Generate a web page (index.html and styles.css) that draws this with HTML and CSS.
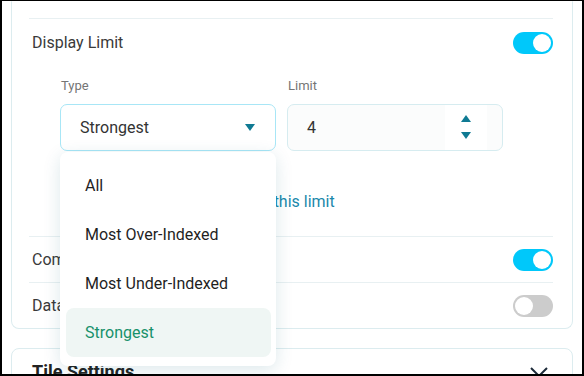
FILE: index.html
```html
<!DOCTYPE html>
<html>
<head>
    <title>Widget Settings</title>
    <meta charset="utf-8">
    <link rel="stylesheet" href="styles.css">
</head>
<body>
    <div class="panel">
        <div class="section">
            <div class="row">
                <span class="row-label">Display Limit</span>
                <span class="toggle on"></span>
            </div>
            <div class="limit-fields">
                <div class="field">
                    <label class="field-label">Type</label>
                    <div class="select focused">
                        <span>Strongest</span>
                        <span class="caret"></span>
                    </div>
                    <div class="menu">
                        <div class="menu-item">All</div>
                        <div class="menu-item">Most Over-Indexed</div>
                        <div class="menu-item">Most Under-Indexed</div>
                        <div class="menu-item selected">Strongest</div>
                    </div>
                </div>
                <div class="field">
                    <label class="field-label">Limit</label>
                    <div class="number-input">
                        <span class="value">4</span>
                        <span class="spinner">
                            <span class="caret up"></span>
                            <span class="caret"></span>
                        </span>
                    </div>
                </div>
            </div>
            <div class="limit-note">
                <a href="#" class="link">Group remaining items above this limit</a>
            </div>
        </div>
        <div class="row">
            <span class="row-label">Compare to Baseline</span>
            <span class="toggle on"></span>
        </div>
        <div class="row">
            <span class="row-label">Data Labels</span>
            <span class="toggle"></span>
        </div>
    </div>

    <div class="panel collapsed">
        <div class="panel-title">
            <span>Tile Settings</span>
            <svg class="chevron" width="20" height="12" viewBox="0 0 20 12">
                <path d="M2 2 L10 10 L18 2" fill="none" stroke="#1d2b3a" stroke-width="2"/>
            </svg>
        </div>
    </div>
</body>
</html>
```

FILE: styles.css
```css
html, body {
    margin: 0;
}
body {
    font-family: Roboto, "Liberation Sans", sans-serif;
    width: 584px;
    height: 376px;
    box-sizing: border-box;
    border: solid #000;
    border-width: 1px 2px 2px 2px;
    padding: 0 9px;
    overflow: hidden;
    background: #fff;
    color: #3a3a3a;
}
.panel {
    border: 1px solid #dcecef;
    border-top-color: transparent;
    border-radius: 0 0 8px 8px;
    padding: 16px 19px 0 17px;
}
.section {
    border-top: 1px solid #e8f0f2;
    border-bottom: 1px solid #e8f0f2;
    padding-bottom: 24px;
}
.row {
    display: flex;
    align-items: center;
    justify-content: space-between;
    height: 45px;
    font-size: 16px;
}
.section .row {
    height: 47px;
}
.panel > .row + .row {
    border-top: 1px solid #e8f0f2;
}
.row-label {
    padding-left: 3px;
}
.toggle {
    position: relative;
    width: 40px;
    height: 22px;
    border-radius: 11px;
    background: #cccccc;
}
.toggle::after {
    content: "";
    position: absolute;
    top: 2px;
    left: 2px;
    width: 18px;
    height: 18px;
    border-radius: 50%;
    background: #fff;
}
.toggle.on {
    background: #00c8fa;
}
.toggle.on::after {
    left: 20px;
}
.limit-fields {
    display: flex;
    gap: 11px;
    padding: 11px 0 0 31px;
}
.field {
    position: relative;
    width: 216px;
}
.field-label {
    display: block;
    font-size: 13px;
    line-height: 18px;
    color: #757575;
    padding-left: 1px;
    margin-bottom: 9px;
}
.select, .number-input {
    display: flex;
    align-items: center;
    justify-content: space-between;
    height: 47px;
    box-sizing: border-box;
    border: 1px solid #d6ecf0;
    border-radius: 7px;
    padding-left: 19px;
    font-size: 16px;
    color: #333;
}
.select {
    padding-right: 20px;
}
.select.focused {
    border-color: #a8e6f6;
}
.caret {
    width: 0;
    height: 0;
    border-left: 5px solid transparent;
    border-right: 5px solid transparent;
    border-top: 7px solid #0f7a93;
}
.caret.up {
    border-top: none;
    border-bottom: 7px solid #0f7a93;
}
.number-input {
    background: #fbfcfc;
    padding-right: 15px;
}
.spinner {
    display: flex;
    flex-direction: column;
    align-items: center;
    justify-content: space-between;
    align-self: stretch;
    width: 42px;
    padding: 10px 0 11px;
    box-sizing: border-box;
    background: #fff;
}
.menu {
    position: absolute;
    top: 75px;
    left: 0;
    width: 216px;
    box-sizing: border-box;
    padding: 9px 5px 9px 6px;
    background: #fff;
    border-radius: 8px;
    box-shadow: 0 4px 18px rgba(0, 90, 110, 0.14);
    z-index: 2;
}
.menu-item {
    height: 49px;
    display: flex;
    align-items: center;
    padding-left: 19px;
    border-radius: 8px;
    font-size: 16px;
    color: #1f1f1f;
}
.menu-item.selected {
    background: #eff6f4;
    color: #17916b;
}
.limit-note {
    padding: 41px 0 0 32px;
    font-size: 16px;
    line-height: 20px;
}
.link {
    color: #1a88ab;
    text-decoration: none;
}
.collapsed {
    margin-top: 19px;
    border-top-color: #dcecef;
    border-radius: 8px;
    padding-top: 12px;
}
.panel-title {
    display: flex;
    align-items: center;
    justify-content: space-between;
    font-size: 18px;
    font-weight: bold;
    color: #222;
    padding-left: 3px;
}
.chevron {
    margin-right: 4px;
}
```
